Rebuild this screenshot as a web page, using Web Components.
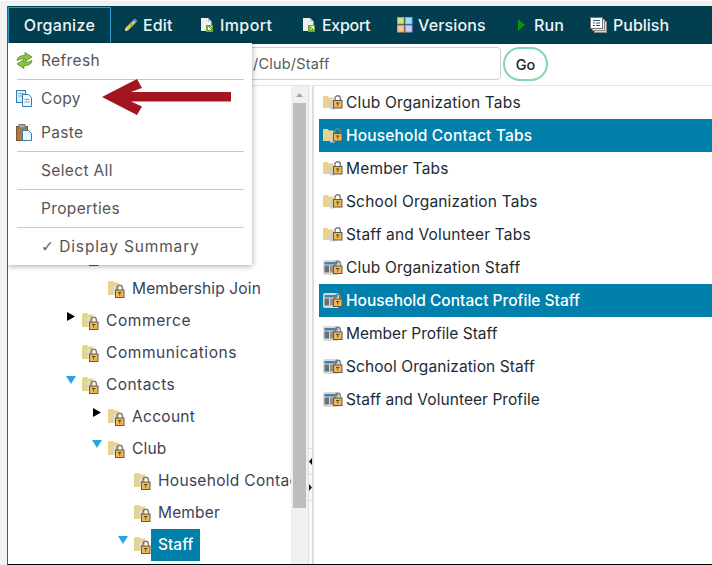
<!DOCTYPE html>
<html>
<head>
<meta charset="utf-8">
<title>Organize</title>
<style>
    html, body { margin: 0; padding: 0; height: 565px; overflow: hidden; }
    html { background: #fff; }
    body { box-sizing: border-box; border-top: 1px solid #fff; background: #f1f1f1; font-family: Inter, "Noto Sans", sans-serif; }
    .check { font-family: "DejaVu Sans", sans-serif; font-size: 15.500px; line-height: 1; letter-spacing: 0; font-weight: 400; color: #666; }
</style>
</head>
<body>
<app-frame>
    <tool-bar>
        <tool-button active label="Organize"></tool-button>
        <tool-button label="Edit" icon="edit" style="--w:76px;--i:19px"></tool-button>
        <tool-button label="Import" icon="import" style="--w:102px;--i:20px;--ls:.4px"></tool-button>
        <tool-button label="Export" icon="export" style="--w:95px;--i:20px;--ls:-.3px"></tool-button>
        <tool-button label="Versions" icon="versions" style="--w:120px;--i:21px"></tool-button>
        <tool-button label="Run" icon="run" style="--w:73px;--i:17px"></tool-button>
        <tool-button label="Publish" icon="publish" style="--w:90px;--i:23px;--ls:0"></tool-button>
    </tool-bar>
    <path-bar value="/Club/Staff"></path-bar>
    <main-area>
        <tree-pane>
            <tree-node level="2" blank></tree-node>
            <tree-node level="3" style="--ls:.13px">Membership Join</tree-node>
            <tree-node level="2" arrow="closed" style="--ls:.6px">Commerce</tree-node>
            <tree-node level="2" style="--ls:.57px">Communications</tree-node>
            <tree-node level="2" arrow="open" style="--ls:.45px">Contacts</tree-node>
            <tree-node level="3" arrow="closed">Account</tree-node>
            <tree-node level="3" arrow="open" style="--ls:.2px">Club</tree-node>
            <tree-node level="4">Household Contact</tree-node>
            <tree-node level="4" style="--ls:.15px">Member</tree-node>
            <tree-node level="4" arrow="open" selected style="--ls:0">Staff</tree-node>
        </tree-pane>
        <scroll-bar></scroll-bar>
        <split-bar></split-bar>
        <list-pane>
            <list-row>Club Organization Tabs</list-row>
            <list-row selected>Household Contact Tabs</list-row>
            <list-row>Member Tabs</list-row>
            <list-row>School Organization Tabs</list-row>
            <list-row>Staff and Volunteer Tabs</list-row>
            <list-row icon="profile">Club Organization Staff</list-row>
            <list-row icon="profile" selected style="--ls:0">Household Contact Profile Staff</list-row>
            <list-row icon="profile" style="--ls:0">Member Profile Staff</list-row>
            <list-row icon="profile" style="--ls:.08px">School Organization Staff</list-row>
            <list-row icon="profile" style="--ls:.06px">Staff and Volunteer Profile</list-row>
        </list-pane>
    </main-area>
    <context-menu>
        <menu-item icon="refresh">Refresh</menu-item>
        <menu-line></menu-line>
        <menu-item icon="copy" style="--h:36px;--pb:0">Copy</menu-item>
        <menu-item icon="paste" style="--h:35px;--pb:2px">Paste</menu-item>
        <menu-line></menu-line>
        <menu-item style="--h:37px">Select All</menu-item>
        <menu-line></menu-line>
        <menu-item style="--h:37px">Properties</menu-item>
        <menu-line></menu-line>
        <menu-item style="--h:37px;--ls:.85px"><span class="check">✓</span> Display Summary</menu-item>
    </context-menu>
    <red-arrow></red-arrow>
</app-frame>

<script>
//Iconos dibujados a mano, todos en SVG
const LOCK = (x, y) => `
    <path d="M${x+2} ${y+5}V${y+3}a2.700 2.700 0 0 1 5.400 0V${y+5}" fill="none" stroke="#7b7d80" stroke-width="1.400"/>
    <rect x="${x+.5}" y="${y+5}" width="8.500" height="7.500" fill="#f0b850" stroke="#5f5a50"/>
    <path d="M${x+3} ${y+7.500}h3.400M${x+4.700} ${y+7.500}v3" stroke="#5f4a20" stroke-width="1"/>`;

const ICONS = {
    tree: `<svg width="18" height="18" viewBox="0 0 18 18">
        <path d="M0 1.500Q0 0 1.500 0H5L6.500 1.500H11V14H0Z" fill="#e6d48e"/>
        <path d="M5.500 4h3v10h-3Z" fill="#d8dde0"/>${LOCK(7, 4)}</svg>`,
    list: `<svg width="20" height="15" viewBox="0 0 20 15">
        <path d="M0 2Q0 1 1 1H4.500L6 2.500H10.500V13H0Z" fill="#e6d48e"/>
        <path d="M7 7h5v7.500H7Z" fill="#c9ced2"/>${LOCK(10, 0.500)}</svg>`,
    profile: `<svg width="20" height="15" viewBox="0 0 20 15">
        <rect x="0" y="0" width="16" height="15" rx="2" fill="#d9d9d9"/>
        <rect x="1.500" y="2" width="13" height="2.500" fill="#4a7fa8"/>
        <rect x="1.500" y="5.500" width="4.500" height="7" fill="#6b6f73"/>
        <rect x="7" y="5.500" width="7.500" height="7" fill="#8d9296"/>${LOCK(10, 1)}</svg>`,
    edit: `<svg width="14" height="14" viewBox="0 0 14 14">
        <path d="M1 13l.8-3.500L9.500 2l2.500 2.500L4.500 12Z" fill="#e8c23c"/>
        <path d="M1 13l.8-3.500L4.500 12Z" fill="#f3e2a0"/>
        <path d="M9.500 2l1.500-1.500 2.500 2.500L12 4.500Z" fill="#4f9fd8"/>
        <path d="M6 5.500l2.500 2.500" stroke="#5aa6dc" stroke-width="1.500"/></svg>`,
    import: `<svg width="14" height="16" viewBox="0 0 14 16">
        <path d="M1 1h7l3.500 3.500V14H1Z" fill="#f0f0f0"/><path d="M8 1v3.500h3.500" fill="#bdbdbd"/>
        <rect x="6" y="8" width="7" height="7" fill="#6fa83a"/>
        <path d="M11.500 9.500l-3 3M8.500 10v2.500H11" fill="none" stroke="#fff" stroke-width="1"/></svg>`,
    export: `<svg width="14" height="16" viewBox="0 0 14 16">
        <path d="M1 1h7l3.500 3.500V14H1Z" fill="#f0f0f0"/><path d="M8 1v3.500h3.500" fill="#bdbdbd"/>
        <rect x="6" y="8" width="7" height="7" fill="#6fa83a"/>
        <path d="M8 13l3-3M8.500 9.500H11.500V12.500" fill="none" stroke="#fff" stroke-width="1"/></svg>`,
    versions: `<svg width="16" height="16" viewBox="0 0 16 16">
        <rect x=".5" y=".5" width="6.500" height="6.500" fill="#d5e08c" stroke="#9aae48"/>
        <rect x="8.500" y=".5" width="6.500" height="6.500" fill="#a6dbfb" stroke="#62aee8"/>
        <rect x=".5" y="8.500" width="6.500" height="6.500" fill="#fbc39a" stroke="#e8935a"/>
        <rect x="8.500" y="8.500" width="6.500" height="6.500" fill="#d6c8fb" stroke="#a590e8"/></svg>`,
    run: `<svg width="9" height="14" viewBox="0 0 9 14"><path d="M1 1l7 6-7 6Z" fill="#0a920a"/></svg>`,
    publish: `<svg width="17" height="16" viewBox="0 0 17 16">
        <rect x="4.500" y="4.500" width="12" height="11" fill="#d8d8d8" stroke="#8a8a8a"/>
        <rect x="2.500" y="2.500" width="12" height="11" fill="#e8e8e8" stroke="#8a8a8a"/>
        <rect x=".5" y=".5" width="12" height="11" fill="#fff" stroke="#777"/>
        <path d="M3 3.500h7M3 6h2M6 6h4M3 8.500h2M6 8.500h4" stroke="#33518c" stroke-width="1.200"/></svg>`,
    refresh: `<svg width="17" height="17" viewBox="0 0 17 17">
        <path d="M1 8.500Q1.500 3.500 9 3.500V.5l7 4.500-7 4.500V6.500Q4 6.500 1 8.500Z" fill="#8cc63e" stroke="#4f8a1c" stroke-width=".8"/>
        <path d="M16 8.500Q15.500 13.500 8 13.500v3L1 12l7-4.500v3q5 0 8-2Z" fill="#8cc63e" stroke="#4f8a1c" stroke-width=".8"/></svg>`,
    copy: `<svg width="17" height="17" viewBox="0 0 17 17">
        <rect x=".5" y=".5" width="9" height="12" fill="#dcedf8" stroke="#2f7fb5"/>
        <path d="M2.500 3.500h5M2.500 6h5" stroke="#6aa8d2"/>
        <path d="M6.500 4.500h6l3 3v9h-9Z" fill="#eef7fc" stroke="#2f7fb5"/>
        <path d="M8.500 9.500h5M8.500 12h5" stroke="#6aa8d2"/></svg>`,
    paste: `<svg width="17" height="17" viewBox="0 0 17 17">
        <rect x=".5" y="2.500" width="11" height="14" fill="#b07a3c" stroke="#7d5526"/>
        <rect x="3" y=".5" width="6" height="3.500" fill="#a9a9a9" stroke="#777"/>
        <path d="M6.500 6.500h6l3 3v7h-9Z" fill="#eef7fc" stroke="#2f7fb5"/></svg>`
};

//Marco general de la pagina
class AppFrame extends HTMLElement {
    connectedCallback() {
        this.attachShadow({ mode: 'open' }).innerHTML = `
            <style>
                :host {
                    display: flex;
                    flex-direction: column;
                    position: relative;
                    box-sizing: border-box;
                    margin: 5px 0 0 7px;
                    height: 559px;
                    background: #fff;
                    border-left: 1px solid #555;
                    border-bottom: 1px solid #000;
                    overflow: hidden;
                }
            </style>
            <slot></slot>`;
    }
}

class ToolBar extends HTMLElement {
    connectedCallback() {
        this.attachShadow({ mode: 'open' }).innerHTML = `
            <style>
                :host {
                    display: flex;
                    flex: none;
                    height: 38px;
                    background: #003e50;
                }
            </style>
            <slot></slot>`;
    }
}

class ToolButton extends HTMLElement {
    connectedCallback() {
        let icon = this.getAttribute('icon');
        this.attachShadow({ mode: 'open' }).innerHTML = `
            <style>
                :host {
                    display: flex;
                    align-items: center;
                    flex: none;
                    box-sizing: border-box;
                    width: var(--w, 103px);
                    color: #eef4f5;
                    font-size: 16px;
                    font-weight: 500;
                    letter-spacing: var(--ls, .15px);
                    padding-bottom: 1px;
                }
                :host([active]) {
                    justify-content: center;
                    margin-right: 13px;
                    height: 37px;
                    margin-top: 1px;
                    border: 1px solid #2a9ccf;
                    letter-spacing: .3px;
                }
                .icon {
                    display: flex;
                    width: var(--i, 0);
                    flex: none;
                }
            </style>
            <span class="icon">${icon ? ICONS[icon] : ''}</span>
            <span>${this.getAttribute('label')}</span>`;
    }
}

class PathBar extends HTMLElement {
    connectedCallback() {
        this.attachShadow({ mode: 'open' }).innerHTML = `
            <style>
                :host {
                    display: flex;
                    flex: none;
                    box-sizing: border-box;
                    height: 42px;
                    padding: 3px 0 4px 200px;
                    border-bottom: 1px solid #e4e4e4;
                    font-size: 14.500px;
                }
                .input {
                    display: flex;
                    align-items: center;
                    box-sizing: border-box;
                    width: 293px;
                    height: 33px;
                    padding-left: 44px;
                    border: 1px solid #cfcfcf;
                    border-radius: 4px;
                    color: #5a5a5a;
                    letter-spacing: .2px;
                }
                .go {
                    display: flex;
                    align-items: center;
                    justify-content: center;
                    box-sizing: border-box;
                    width: 45px;
                    height: 34px;
                    margin-left: 2px;
                    border: 2px solid #82d6b4;
                    border-radius: 17px;
                    color: #222;
                    font-weight: 500;
                }
            </style>
            <div class="input">${this.getAttribute('value')}</div>
            <div class="go">Go</div>`;
    }
}

class MainArea extends HTMLElement {
    connectedCallback() {
        this.attachShadow({ mode: 'open' }).innerHTML = `
            <style>
                :host { display: flex; flex: 1; min-height: 0; }
            </style>
            <slot></slot>`;
    }
}

class TreePane extends HTMLElement {
    connectedCallback() {
        this.attachShadow({ mode: 'open' }).innerHTML = `
            <style>
                :host {
                    display: block;
                    flex: none;
                    box-sizing: border-box;
                    width: 283px;
                    padding-top: 155px;
                    overflow: hidden;
                    color: #3a4256;
                    font-size: 15.500px;
                }
            </style>
            <slot></slot>`;
    }
}

class TreeNode extends HTMLElement {
    connectedCallback() {
        let level = Number(this.getAttribute('level'));
        let arrow = this.getAttribute('arrow');
        let tri = '';
        if (arrow === 'closed') {
            tri = `<svg class="tri closed" width="8" height="9" viewBox="0 0 8 9"><path d="M0 0l8 4.500L0 9Z" fill="#000"/></svg>`;
        } else if (arrow === 'open') {
            tri = `<svg class="tri" width="10" height="8" viewBox="0 0 10 8"><path d="M0 0h10L5 8Z" fill="#2ba3e0"/></svg>`;
        }
        this.attachShadow({ mode: 'open' }).innerHTML = `
            <style>
                :host {
                    display: flex;
                    align-items: center;
                    position: relative;
                    box-sizing: border-box;
                    height: 32px;
                    padding-left: ${level * 26 + 22}px;
                    white-space: nowrap;
                    letter-spacing: var(--ls, .3px);
                }
                .tri { position: absolute; left: ${level * 26 + 6}px; top: 7px; }
                .closed { left: ${level * 26 + 7}px; }
                .icon { display: flex; flex: none; width: 24px; margin-top: 2px; }
                .label { line-height: 32px; }
                :host([selected]) .label {
                    position: relative;
                    left: -7px;
                    padding: 0 7px;
                    background: #0080aa;
                    color: #fff;
                    font-weight: 500;
                }
            </style>
            ${tri}
            <span class="icon">${ICONS.tree}</span>
            <span class="label"><slot></slot></span>`;
    }
}

class ScrollBar extends HTMLElement {
    connectedCallback() {
        this.attachShadow({ mode: 'open' }).innerHTML = `
            <style>
                :host {
                    display: block;
                    flex: none;
                    box-sizing: border-box;
                    width: 17px;
                    padding: 7px 2px 0;
                    background: #f0f0f0;
                }
                svg { display: block; margin: 0 auto 6px; }
                .thumb { height: 405px; background: #bdbdbd; }
            </style>
            <svg width="7" height="4" viewBox="0 0 7 4"><path d="M0 4l3.500-4L7 4Z" fill="#a3a3a3"/></svg>
            <div class="thumb"></div>`;
    }
}

class SplitBar extends HTMLElement {
    connectedCallback() {
        this.attachShadow({ mode: 'open' }).innerHTML = `
            <style>
                :host {
                    display: block;
                    flex: none;
                    box-sizing: border-box;
                    width: 6px;
                    padding-top: 362px;
                    border-left: 1px solid #dedede;
                    border-right: 2px solid #dedede;
                    background: #fafafa;
                }
                .cell {
                    display: flex;
                    align-items: center;
                    height: 26px;
                    border-top: 1px solid #dedede;
                    box-sizing: border-box;
                }
                .end { height: 1px; background: #dedede; }
                svg { display: block; }
            </style>
            <div class="cell"><svg width="3" height="7" viewBox="0 0 3 7"><path d="M3 0L0 3.500 3 7Z" fill="#000"/></svg></div>
            <div class="cell"><svg width="3" height="7" viewBox="0 0 3 7"><path d="M0 0l3 3.500L0 7Z" fill="#05204a"/></svg></div>
            <div class="end"></div>`;
    }
}

class ListPane extends HTMLElement {
    connectedCallback() {
        this.attachShadow({ mode: 'open' }).innerHTML = `
            <style>
                :host {
                    display: block;
                    flex: 1;
                    padding-left: 5px;
                    color: #222a33;
                    font-size: 15.500px;
                }
            </style>
            <slot></slot>`;
    }
}

class ListRow extends HTMLElement {
    connectedCallback() {
        let icon = this.getAttribute('icon') || 'list';
        this.attachShadow({ mode: 'open' }).innerHTML = `
            <style>
                :host {
                    display: flex;
                    align-items: center;
                    height: 33px;
                    padding-left: 4px;
                    white-space: nowrap;
                    letter-spacing: var(--ls, .18px);
                }
                :host([selected]) { background: #0080aa; color: #fff; font-weight: 500; }
                .icon { display: flex; flex: none; width: 23px; }
            </style>
            <span class="icon">${ICONS[icon]}</span>
            <slot></slot>`;
    }
}

//El menu va encima del arbol
class ContextMenu extends HTMLElement {
    connectedCallback() {
        this.attachShadow({ mode: 'open' }).innerHTML = `
            <style>
                :host {
                    display: block;
                    position: absolute;
                    left: 0;
                    top: 37px;
                    box-sizing: border-box;
                    width: 244px;
                    height: 222px;
                    padding: 0 8px 0 9px;
                    background: #fff;
                    box-shadow: 0 1px 6px rgba(0,0,0,.35);
                    color: #555;
                    font-size: 15.500px;
                }
            </style>
            <slot></slot>`;
    }
}

class MenuItem extends HTMLElement {
    connectedCallback() {
        let icon = this.getAttribute('icon');
        this.attachShadow({ mode: 'open' }).innerHTML = `
            <style>
                :host {
                    display: flex;
                    align-items: center;
                    box-sizing: border-box;
                    height: var(--h, 36px);
                    padding-bottom: var(--pb, 1px);
                    letter-spacing: var(--ls, .35px);
                    white-space: pre;
                }
                .icon { display: flex; flex: none; width: 24px; margin-left: -1px; margin-right: 1px; }
            </style>
            <span class="icon">${icon ? ICONS[icon] : ''}</span>
            <span><slot></slot></span>`;
    }
}

class MenuLine extends HTMLElement {
    connectedCallback() {
        this.attachShadow({ mode: 'open' }).innerHTML = `
            <style>
                :host { display: block; height: 1px; background: #c8c8c8; }
            </style>`;
    }
}

class RedArrow extends HTMLElement {
    connectedCallback() {
        this.attachShadow({ mode: 'open' }).innerHTML = `
            <style>
                :host { position: absolute; left: 94px; top: 73px; width: 130px; height: 36px; }
                svg { display: block; }
            </style>
            <svg width="130" height="36" viewBox="0 0 130 36">
                <path d="M0 18L35 0l5 9-11 4h100v9.500H29l11 5-5 8.500Z" fill="#a3161f"/>
            </svg>`;
    }
}

window.customElements.define('app-frame', AppFrame);
window.customElements.define('tool-bar', ToolBar);
window.customElements.define('tool-button', ToolButton);
window.customElements.define('path-bar', PathBar);
window.customElements.define('main-area', MainArea);
window.customElements.define('tree-pane', TreePane);
window.customElements.define('tree-node', TreeNode);
window.customElements.define('scroll-bar', ScrollBar);
window.customElements.define('split-bar', SplitBar);
window.customElements.define('list-pane', ListPane);
window.customElements.define('list-row', ListRow);
window.customElements.define('context-menu', ContextMenu);
window.customElements.define('menu-item', MenuItem);
window.customElements.define('menu-line', MenuLine);
window.customElements.define('red-arrow', RedArrow);
</script>
</body>
</html>
